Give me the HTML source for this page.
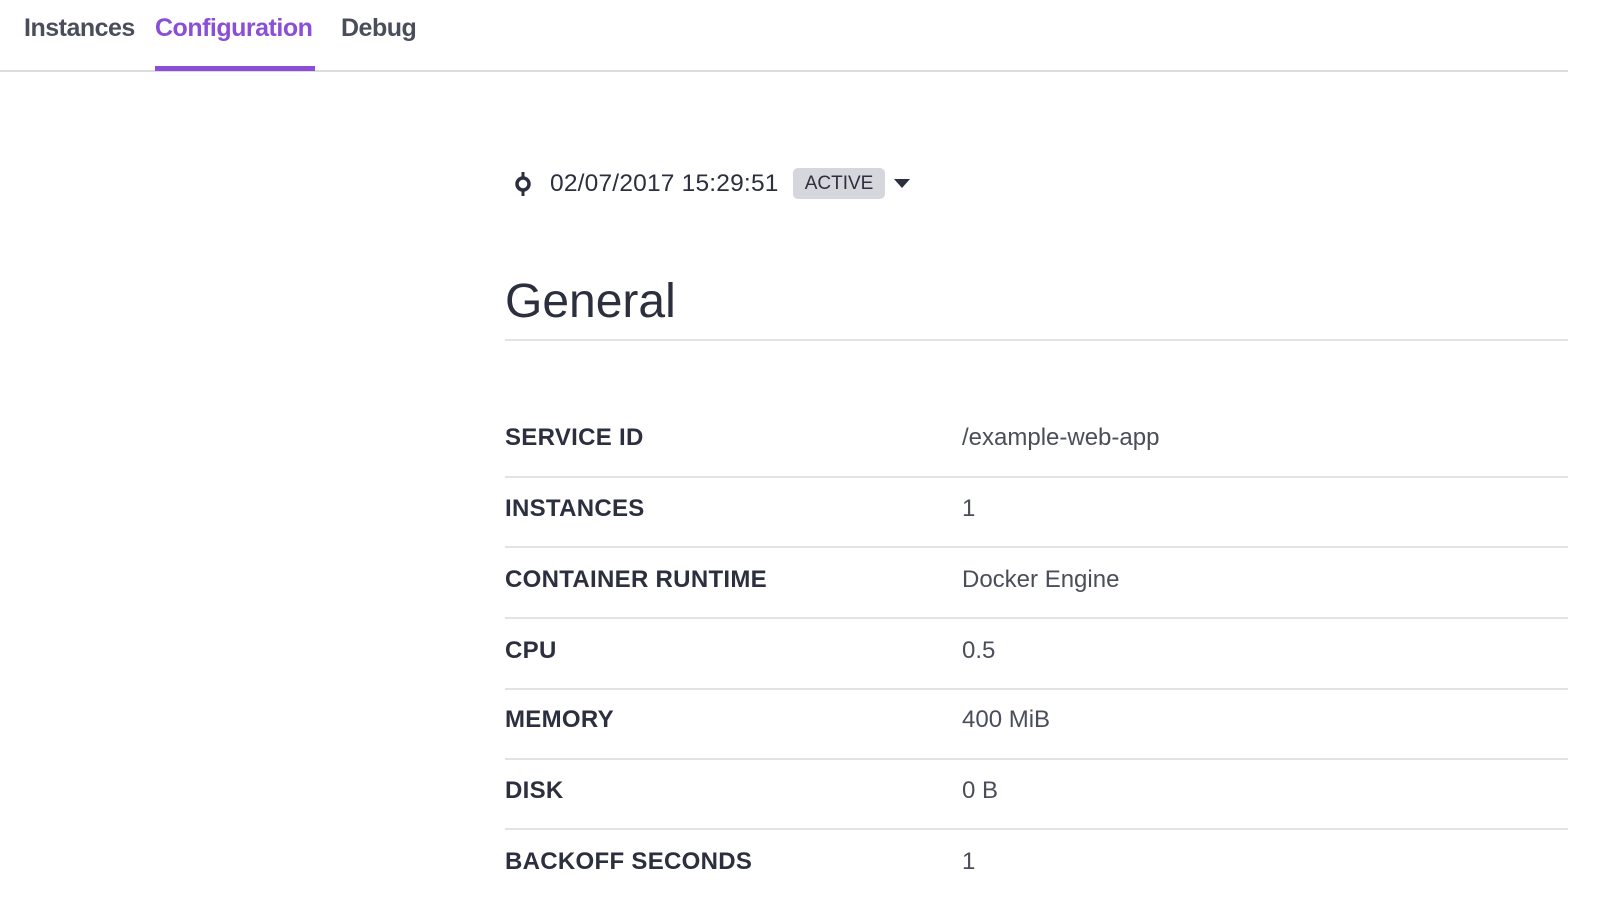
<!DOCTYPE html>
<html><head><style>
body{margin:0;width:1599px;height:909px;overflow:hidden;background:#fff;font-family:"Liberation Sans",sans-serif;color:#2b2f3e;}
.tabs{position:absolute;left:0;top:0;width:1568px;height:70px;border-bottom:2px solid #dcdcdf;}
.tab{position:absolute;top:14px;font-size:25px;font-weight:bold;color:#4a4e5a;letter-spacing:-0.5px;}
.tab.on{color:#8a4fd6;}
.ul{position:absolute;left:155px;top:66px;width:160px;height:5px;background:#8a4fd6;}
.hdr{position:absolute;left:512px;top:170px;font-size:24.5px;color:#2b2f3e;letter-spacing:0.2px;}
.badge{position:absolute;left:793px;top:168px;width:92px;height:31px;background:#d6d7dc;border-radius:5px;font-size:19px;text-align:center;line-height:32px;color:#2b2f3e;}
.gen{position:absolute;left:505px;top:274px;font-size:48px;color:#2b2f3e;}
.hl{position:absolute;left:505px;width:1063px;height:2px;background:#e3e3e6;}
.lab{position:absolute;left:505px;font-size:24px;font-weight:bold;letter-spacing:0.3px;}
.val{position:absolute;left:962px;font-size:24px;color:#4a4e5a;}
</style></head><body>
<div class="tabs"></div>
<div class="tab" style="left:24px">Instances</div>
<div class="tab on" style="left:155px">Configuration</div>
<div class="tab" style="left:341px">Debug</div>
<div class="ul"></div>
<svg style="position:absolute;left:512px;top:170px" width="22" height="30" viewBox="0 0 22 30"><line x1="11" y1="2" x2="11" y2="26" stroke="#2b2f3e" stroke-width="3"/><circle cx="11" cy="14" r="6" fill="#fff" stroke="#2b2f3e" stroke-width="3.5"/></svg>
<div class="hdr" style="left:550px">02/07/2017 15:29:51</div>
<div class="badge">ACTIVE</div>
<svg style="position:absolute;left:893px;top:178px" width="18" height="12"><polygon points="1,1 17,1 9,10" fill="#2b2f3e"/></svg>
<div class="gen">General</div>
<div class="hl" style="top:339px"></div>
<div class="lab" style="top:424px">SERVICE ID</div><div class="val" style="top:424px">/example-web-app</div>
<div class="hl" style="top:476px"></div>
<div class="lab" style="top:495px">INSTANCES</div><div class="val" style="top:495px">1</div>
<div class="hl" style="top:546px"></div>
<div class="lab" style="top:566px">CONTAINER RUNTIME</div><div class="val" style="top:566px">Docker Engine</div>
<div class="hl" style="top:617px"></div>
<div class="lab" style="top:637px">CPU</div><div class="val" style="top:637px">0.5</div>
<div class="hl" style="top:688px"></div>
<div class="lab" style="top:706px">MEMORY</div><div class="val" style="top:706px">400 MiB</div>
<div class="hl" style="top:758px"></div>
<div class="lab" style="top:777px">DISK</div><div class="val" style="top:777px">0 B</div>
<div class="hl" style="top:828px"></div>
<div class="lab" style="top:848px">BACKOFF SECONDS</div><div class="val" style="top:848px">1</div>
</body></html>
